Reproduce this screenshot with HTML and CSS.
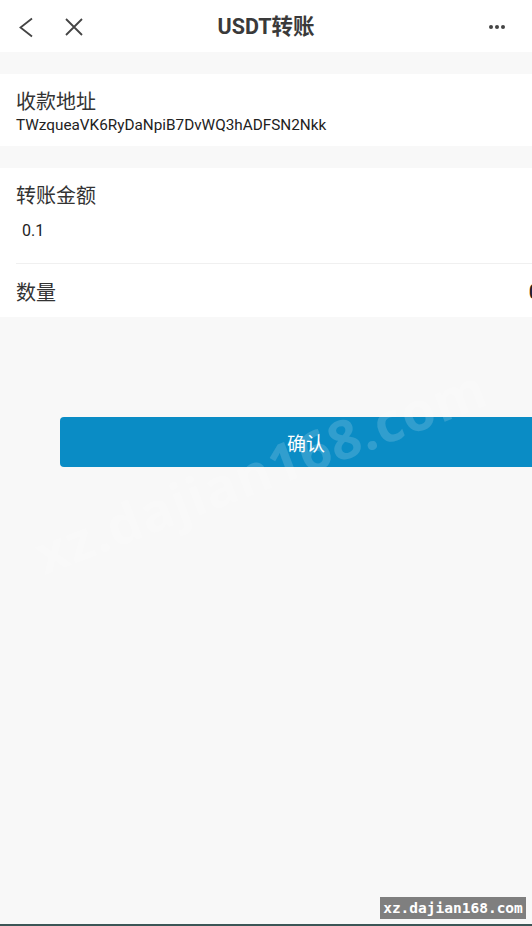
FILE: index.html
```html
<!DOCTYPE html>
<html lang="zh">
<head>
<meta charset="utf-8">
<title>USDT转账</title>
<link rel="stylesheet" href="styles.css">
</head>
<body>
<div class="page">
  <header class="nav">
    <div class="nav-left">
      <svg class="ico" width="18" height="24" viewBox="0 0 18 24"><path d="M15 3.5 L3.5 12.5 L15 21.5" fill="none" stroke="#444" stroke-width="1.8"/></svg>
      <svg class="ico close" width="22" height="22" viewBox="0 0 22 22"><path d="M3 3 L19 19 M19 3 L3 19" fill="none" stroke="#444" stroke-width="1.8"/></svg>
    </div>
    <div class="nav-title">USDT转账</div>
    <div class="nav-right">
      <span class="dot"></span><span class="dot"></span><span class="dot"></span>
    </div>
  </header>

  <main class="content">
    <section class="card">
      <div class="field">
        <div class="label">收款地址</div>
        <div class="address">TWzqueaVK6RyDaNpiB7DvWQ3hADFSN2Nkk</div>
      </div>
    </section>

    <section class="card">
      <div class="field amount">
        <div class="label">转账金额</div>
        <div class="value">0.1</div>
      </div>
      <div class="field row">
        <div class="label">数量</div>
        <div class="qty">0</div>
      </div>
    </section>

    <button class="confirm">确认</button>
  </main>

  <div class="watermark">xz.dajian168.com</div>
  <div class="tag">xz.dajian168.com</div>
  <div class="bottom-line"></div>
</div>
</body>
</html>
```

FILE: styles.css
```css
* { box-sizing: border-box; }
html, body {
  margin: 0;
  padding: 0;
  width: 532px;
  height: 926px;
  overflow: hidden;
  background: #f8f8f8;
  font-family: Roboto, "Noto Sans CJK SC", sans-serif;
  color: #333;
}
.page {
  position: relative;
  width: 532px;
  height: 926px;
  overflow: hidden;
}
.nav {
  height: 52px;
  background: #fff;
  display: flex;
  align-items: center;
  justify-content: space-between;
  padding: 0 27px 0 17px;
  position: relative;
}
.nav-left {
  display: flex;
  align-items: center;
  gap: 28px;
  padding-top: 2px;
}
.ico { display: block; }
.nav-title {
  position: absolute;
  left: 0;
  right: 0;
  top: 0;
  height: 52px;
  line-height: 54px;
  text-align: center;
  font-size: 21.5px;
  font-weight: 700;
  color: #3a3a3a;
  font-family: Roboto, "Noto Sans CJK SC", sans-serif;
  pointer-events: none;
}
.nav-right {
  display: flex;
  gap: 2px;
  padding-top: 2px;
}
.dot {
  width: 4px;
  height: 4px;
  border-radius: 50%;
  background: #444;
}
.content {
  width: 552px;
  padding-top: 22px;
}
.card {
  background: #fff;
  margin-bottom: 22px;
  padding-left: 16px;
}
.field {
  padding-right: 12px;
}
.card:first-child .field {
  padding-top: 12px;
  height: 72px;
}
.label {
  font-family: "Noto Sans CJK SC", sans-serif;
  font-size: 20px;
  line-height: 30px;
  color: #333;
}
.address {
  font-size: 15.3px;
  line-height: 18px;
  color: #222;
}
.amount {
  padding-top: 12px;
  height: 96px;
  border-bottom: 1px solid #f0f0f0;
}
.value {
  padding-left: 6px;
  padding-top: 11px;
  font-size: 16px;
  line-height: 20px;
  color: #222;
}
.row {
  height: 53px;
  display: flex;
  align-items: center;
  justify-content: space-between;
  padding-top: 2px;
}
.qty {
  font-size: 20px;
  color: #222;
  font-weight: 500;
}
.confirm {
  display: block;
  margin: 100px 0 0 60px;
  width: 492px;
  height: 50px;
  border: 0;
  border-radius: 4px;
  background: #0a8cc5;
  color: #fff;
  font-family: "Noto Sans CJK SC", sans-serif;
  font-size: 19px;
  padding: 0;
}
.watermark {
  position: absolute;
  left: 20px;
  top: 440px;
  width: 480px;
  text-align: center;
  font-family: "Open Sans", sans-serif;
  font-weight: 700;
  font-size: 54px;
  line-height: 60px;
  color: rgba(255, 255, 255, 0.16);
  transform: rotate(-21deg);
  letter-spacing: 1px;
  pointer-events: none;
  white-space: nowrap;
}
.tag {
  position: absolute;
  left: 380px;
  top: 897px;
  width: 146px;
  height: 22px;
  background: #7f7f7f;
  color: #fff;
  font-family: "DejaVu Sans Mono", monospace;
  font-weight: 700;
  font-size: 14.5px;
  line-height: 22px;
  text-align: center;
}
.bottom-line {
  position: absolute;
  left: 0;
  right: 0;
  bottom: 0;
  height: 2px;
  background: #3b5656;
}
```
